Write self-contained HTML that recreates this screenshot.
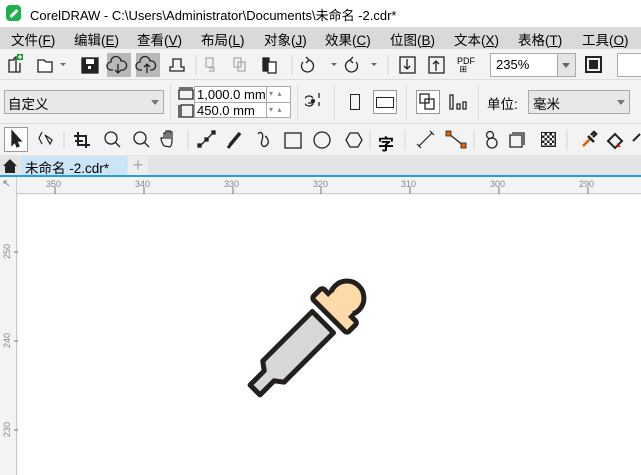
<!DOCTYPE html>
<html><head><meta charset="utf-8"><style>
*{margin:0;padding:0;box-sizing:border-box}
body{width:641px;height:475px;overflow:hidden;background:#f3f3f3;font-family:"Liberation Sans","Noto Sans CJK SC",sans-serif;font-size:13px;color:#000;position:relative}
.a{position:absolute}
.ic{position:absolute;stroke:#222;fill:none;stroke-width:1.3}
</style></head><body>
<!-- title -->
<div class="a" style="left:0;top:0;width:641px;height:27px;background:#fff"></div>
<div class="a" style="left:6px;top:5px;width:15px;height:16px;background:#1db34a;border-radius:4px"><div class="a" style="left:3px;top:7px;width:10px;height:3px;background:#fff;transform:rotate(-45deg);border-radius:1px"></div></div>
<div class="a" style="left:30px;top:5px;font-size:13px">CorelDRAW - C:\Users\Administrator\Documents\未命名 -2.cdr*</div>
<!-- menu -->
<div class="a" style="left:0;top:27px;width:641px;height:22px;background:#d9d9d9"></div>
<div class="a" style="top:29px;left:11px;font-size:13.5px">文件(<u>F</u>)</div>
<div class="a" style="top:29px;left:74px;font-size:13.5px">编辑(<u>E</u>)</div>
<div class="a" style="top:29px;left:137px;font-size:13.5px">查看(<u>V</u>)</div>
<div class="a" style="top:29px;left:201px;font-size:13.5px">布局(<u>L</u>)</div>
<div class="a" style="top:29px;left:264px;font-size:13.5px">对象(<u>J</u>)</div>
<div class="a" style="top:29px;left:325px;font-size:13.5px">效果(<u>C</u>)</div>
<div class="a" style="top:29px;left:390px;font-size:13.5px">位图(<u>B</u>)</div>
<div class="a" style="top:29px;left:454px;font-size:13.5px">文本(<u>X</u>)</div>
<div class="a" style="top:29px;left:518px;font-size:13.5px">表格(<u>T</u>)</div>
<div class="a" style="top:29px;left:582px;font-size:13.5px">工具(<u>O</u>)</div>
<!-- toolbar1 -->
<div class="a" style="left:0;top:79px;width:641px;height:1px;background:#ddd"></div>
<div class="a" style="left:107px;top:53px;width:24px;height:24px;background:#b8b8b8"></div>
<div class="a" style="left:136px;top:53px;width:24px;height:24px;background:#b8b8b8"></div>
<svg class="ic" style="left:0;top:49px" width="641" height="30">
<path d="M9 11h5v-2h2v-2h0v16H9z M9 11v12h11V14"/><rect x="17" y="5" width="6" height="6" fill="#1a9a3a" stroke="none"/><path d="M20 6v4M18 8h4" stroke="#fff" stroke-width="1.2"/>
<path d="M38 11h6l2 2h6v10H38z" fill="#fff"/><path d="M60 14l3 3 3-3z" fill="#666" stroke="none"/>
<rect x="82" y="9" width="16" height="15" fill="#222"/><rect x="86" y="10" width="8" height="5" fill="#fff" stroke="none"/><rect x="88" y="17" width="3" height="3" fill="#fff" stroke="none"/>
<path d="M113 21h-2a4 4 0 0 1 0-8 5 5 0 0 1 10-1 4 4 0 0 1 2 9h-2M118 15v9M115 21l3 3 3-3"/>
<path d="M142 21h-2a4 4 0 0 1 0-8 5 5 0 0 1 10-1 4 4 0 0 1 2 9h-2M147 24v-9M144 18l3-3 3 3"/>
<path d="M170 22h14v-4h-3v-8h-8v8h-3z"/>
<line x1="196" y1="6" x2="196" y2="26" stroke="#ddd"/>
<path d="M206 9h7v9h-7zM209 19h5v3h-5" stroke="#aaa"/><path d="M234 9h7v9h-7zM238 13h7v9h-7z" stroke="#aaa"/>
<rect x="263" y="9" width="6" height="13" fill="#222"/><rect x="268" y="13" width="8" height="11" fill="#fff"/>
<line x1="292" y1="6" x2="292" y2="26" stroke="#ddd"/>
<path d="M303 13a6 6 0 1 0 5-2M306 8l3 3-3 3"/><path d="M331 14l3 3 3-3z" fill="#666" stroke="none"/>
<path d="M356 13a6 6 0 1 1-5-2M353 8l-3 3 3 3"/><path d="M371 14l3 3 3-3z" fill="#666" stroke="none"/>
<line x1="388" y1="6" x2="388" y2="26" stroke="#ddd"/>
<rect x="400" y="8" width="15" height="16"/><path d="M407 10v10M404 17l3 3 3-3"/>
<rect x="429" y="8" width="15" height="16"/><path d="M436 22v-10M433 15l3-3 3 3"/>
</svg>
<div class="a" style="left:457px;top:57px;font-size:9px;line-height:8px">PDF<br>&nbsp;⊞</div>
<div class="a" style="left:490px;top:53px;width:86px;height:24px;border:1px solid #aaa;background:#fff"></div>
<div class="a" style="left:496px;top:57px;font-size:13px">235%</div>
<div class="a" style="left:557px;top:54px;width:18px;height:22px;background:#e4e4e4;border-left:1px solid #aaa"></div>
<div class="a" style="left:562px;top:63px;border:4px solid transparent;border-top:5px solid #666"></div>
<div class="a" style="left:585px;top:56px;width:17px;height:17px;border:2px solid #222"><div style="margin:2px;width:9px;height:9px;background:#222"></div></div>
<div class="a" style="left:617px;top:53px;width:30px;height:24px;border:1px solid #aaa;background:#fff"></div>
<!-- toolbar2 -->
<div class="a" style="left:0;top:123px;width:641px;height:1px;background:#ddd"></div>
<div class="a" style="left:4px;top:90px;width:160px;height:24px;border:1px solid #aaa;background:#e8e8e8"></div>
<div class="a" style="left:8px;top:93px;font-size:13.5px">自定义</div>
<div class="a" style="left:151px;top:100px;border:4px solid transparent;border-top:5px solid #777"></div>
<div class="a" style="left:170px;top:84px;width:1px;height:36px;background:#ddd"></div>
<svg class="ic" style="left:176px;top:84px" width="20" height="36" stroke-width="1"><path d="M3 4h14M3 6h14v9H3zM3 21v13M5 21h12v12H5z"/></svg>
<div class="a" style="left:194px;top:86px;width:97px;height:32px;border:1px solid #aaa;background:#fff"></div>
<div class="a" style="left:194px;top:102px;width:97px;height:1px;background:#aaa"></div>
<div class="a" style="left:266px;top:86px;width:1px;height:32px;background:#aaa"></div>
<div class="a" style="left:197px;top:87px;font-size:13px">1,000.0 mm</div>
<div class="a" style="left:197px;top:103px;font-size:13px">450.0 mm</div>
<div class="a" style="left:269px;top:86px;font-size:8px;color:#888;line-height:16px">▾&nbsp; ▴<br>▾&nbsp; ▴</div>
<div class="a" style="left:297px;top:84px;width:1px;height:36px;background:#ddd"></div>
<svg class="ic" style="left:305px;top:90px" width="24" height="24" stroke-width="1.3"><path d="M8 8a5 5 0 1 0 0 6M3 13h6M14 3v5M14 12v4"/><circle cx="8" cy="11" r="1.5" fill="#222"/></svg>
<div class="a" style="left:334px;top:84px;width:1px;height:36px;background:#ddd"></div>
<div class="a" style="left:350px;top:94px;width:10px;height:16px;border:1px solid #222"></div>
<div class="a" style="left:373px;top:90px;width:24px;height:24px;border:1px solid #999;background:#fff"><div style="margin:6px 2px;width:18px;height:11px;border:1px solid #222"></div></div>
<div class="a" style="left:406px;top:84px;width:1px;height:36px;background:#ddd"></div>
<div class="a" style="left:416px;top:90px;width:24px;height:24px;border:1px solid #999;background:#fff"></div>
<svg class="ic" style="left:416px;top:90px" width="24" height="24" stroke-width="1"><path d="M4 4h9v9H4zM9 9h9v10H9z"/></svg>
<svg class="ic" style="left:447px;top:90px" width="24" height="24" stroke-width="1"><path d="M3 5h3v14H3zM10 14h3v5h-3zM16 12h3v7h-3z"/></svg>
<div class="a" style="left:478px;top:84px;width:1px;height:36px;background:#ddd"></div>
<div class="a" style="left:487px;top:93px;font-size:13.5px">单位:</div>
<div class="a" style="left:528px;top:90px;width:102px;height:24px;border:1px solid #aaa;background:#e8e8e8"></div>
<div class="a" style="left:533px;top:93px;font-size:13.5px">毫米</div>
<div class="a" style="left:617px;top:100px;border:4px solid transparent;border-top:5px solid #777"></div>
<!-- toolbox -->
<div class="a" style="left:0;top:155px;width:641px;height:1px;background:#ddd"></div>
<div class="a" style="left:4px;top:127px;width:24px;height:25px;border:1px solid #999;background:#fff"></div>
<svg class="ic" style="left:0;top:124px" width="641" height="31">
<path d="M12 7v14l3-3 2 5 2-1-2-5h4z" fill="#222"/>
<path d="M42 8l-3 6 3 6M45 11l5 9 2-4z" stroke-width="1.2"/>
<line x1="64" y1="6" x2="64" y2="26" stroke="#ddd"/>
<path d="M78 8v13h12M74 12h12v12M75 17h8" stroke-width="2"/>
<circle cx="111" cy="14" r="6"/><path d="M115 18l5 5"/>
<circle cx="140" cy="14" r="6"/><path d="M144 18l5 5"/>
<path d="M164 22c-2-3-3-6-3-8h3V9h2v6V7h2v8V7h2v8V8h2v9c0 3-1 5-2 6z" stroke-width="1.2"/>
<line x1="188" y1="6" x2="188" y2="26" stroke="#ddd"/>
<path d="M199 23l15-15"/><rect x="198" y="20" width="3" height="3" fill="#222"/><rect x="205" y="14" width="3" height="3" fill="#222"/><rect x="212" y="7" width="3" height="3" fill="#222"/>
<path d="M230 21l10-12" stroke-width="3.5"/><path d="M228 24l3-4" stroke-width="3"/>
<path d="M258 10c3-4 6 0 4 6s2 8 5 5 0-8-2-9"/>
<rect x="285" y="9" width="16" height="15"/>
<circle cx="322" cy="16" r="8"/>
<path d="M346 16l4-7h8l4 7-4 7h-8z"/>
<line x1="370" y1="6" x2="370" y2="26" stroke="#ddd"/>
<line x1="405" y1="6" x2="405" y2="26" stroke="#ddd"/>
<path d="M419 22l13-13" stroke-width="1.2"/><path d="M417 20l4 4M430 7l4 4" stroke-width="1.2"/>
<path d="M449 10l15 12"/><rect x="446" y="7" width="5" height="5" fill="#f06000" stroke="#222" stroke-width="0.8"/><rect x="461" y="19" width="5" height="5" fill="#f06000" stroke="#222" stroke-width="0.8"/>
<line x1="474" y1="6" x2="474" y2="26" stroke="#ddd"/>
<circle cx="490" cy="11" r="3.5"/><circle cx="492" cy="19" r="5"/>
<path d="M512 9h12v12M510 11h12v12h-12z"/>
<line x1="567" y1="6" x2="567" y2="26" stroke="#ddd"/>
<path d="M583 22l8-8" stroke="#e05a00" stroke-width="2.5"/><path d="M588 12l6 6M591 11l3-3 2 2-3 3" stroke-width="2.5"/>
<path d="M608 17l7-7 7 7-7 7z" stroke-width="2"/><path d="M617 19l4 4h-4z" fill="#e00" stroke="none"/>
<path d="M633 17l7-7" stroke-width="2"/>
</svg>
<div class="a" style="left:541px;top:132px;width:15px;height:15px;background:repeating-conic-gradient(#222 0 25%,#fff 0 50%) 0 0/5px 5px;border:1px solid #222"></div>
<div class="a" style="left:378px;top:131px;font-size:16px;font-weight:bold">字</div>
<!-- tabs -->
<div class="a" style="left:0;top:155px;width:641px;height:21px;background:#e4e4e4"></div>
<svg class="a" style="left:2px;top:158px" width="16" height="16"><path d="M1 8l7-7 7 7h-2v7H3V8z" fill="#222"/></svg>
<div class="a" style="left:21px;top:156px;width:106px;height:20px;background:#cce4f7"></div>
<div class="a" style="left:25px;top:157px;font-size:13.5px">未命名 -2.cdr*</div>
<div class="a" style="left:128px;top:156px;width:20px;height:20px;background:#ededed;color:#aaa;font-size:18px;text-align:center;line-height:19px">+</div>
<div class="a" style="left:0;top:175px;width:641px;height:2px;background:#1ea0e8"></div>
<!-- rulers -->
<div class="a" style="left:0;top:177px;width:641px;height:17px;background:#f3f3f3;border-bottom:1px solid #ccc"></div>
<div class="a" style="left:0;top:177px;width:17px;height:298px;background:#f3f3f3;border-right:1px solid #ccc"></div>
<div class="a" style="left:18px;top:195px;width:623px;height:280px;background:#fff"></div>
<svg class="a" style="left:0;top:177px" width="641" height="298" font-family="Liberation Sans" font-size="9" fill="#888">
<text x="46" y="10">350</text><text x="135" y="10">340</text><text x="224" y="10">330</text><text x="313" y="10">320</text><text x="401" y="10">310</text><text x="490" y="10">300</text><text x="579" y="10">290</text>
<g stroke="#777"><path d="M55 10v7M144 10v7M233 10v7M321 10v7M410 10v7M499 10v7M588 10v7"/>
<path d="M14 75h4M14 164h4M14 253h4"/></g>
<text transform="translate(10,82) rotate(-90)">250</text><text transform="translate(10,171) rotate(-90)">240</text><text transform="translate(10,260) rotate(-90)">230</text>
<path d="M4 4l5 5M4 4h3M4 4v3" stroke="#888" fill="none"/>
</svg>
<!-- eyedropper -->
<svg class="a" style="left:230px;top:260px" width="170" height="160">
<g transform="translate(83,72) rotate(45)" stroke="#231f1c" stroke-width="5" stroke-linejoin="round">
<path d="M-7 82h14v-20l8-6v-70h-30v70l8 6z" fill="#d7d8d5"/>
<circle cx="0" cy="-48" r="17" fill="#fed9a9"/>
<rect x="-25" y="-38" width="50" height="15" rx="3" fill="#fed9a9"/>
<rect x="-14" y="-42" width="28" height="8" fill="#fed9a9" stroke="none"/>
</g>
</svg>
</body></html>
